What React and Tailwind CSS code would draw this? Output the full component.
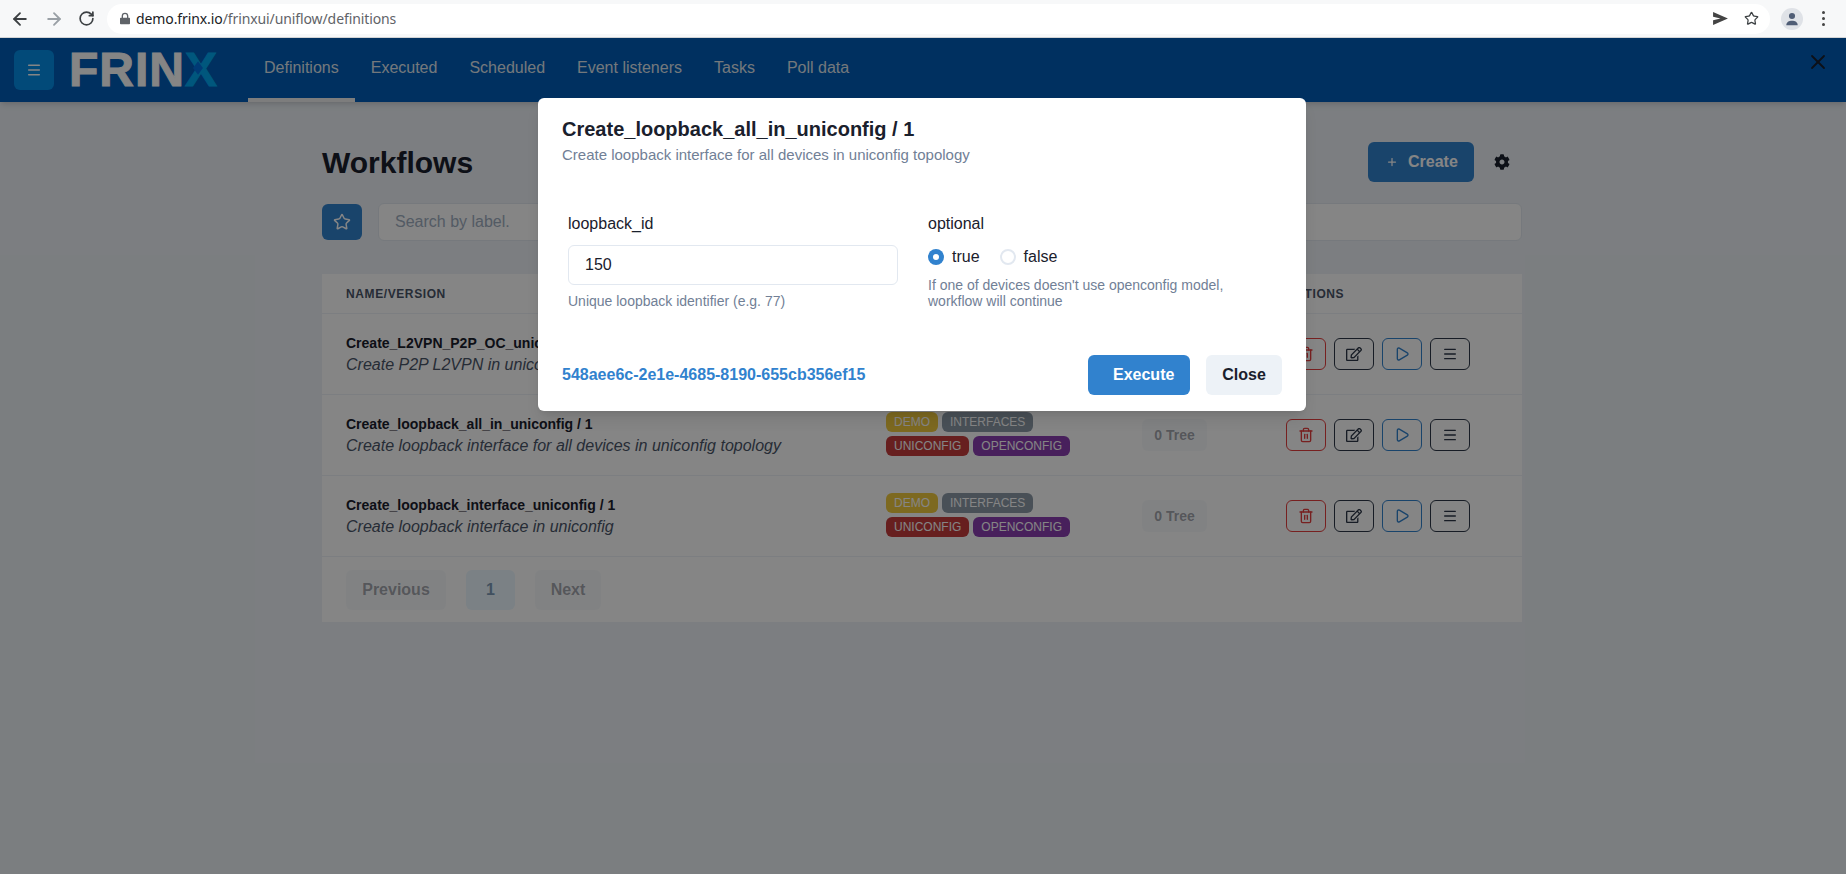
import React from 'react';
import { ArrowLeft, ArrowRight, RotateCw, Star, Trash2, Play, Plus, X, Menu } from 'lucide-react';
import { FaRegEdit, FaCog } from 'react-icons/fa';

const tabs = ['Definitions', 'Executed', 'Scheduled', 'Event listeners', 'Tasks', 'Poll data'];

const rows = [
  { name: 'Create_L2VPN_P2P_OC_uniconfig / 1', desc: 'Create P2P L2VPN in uniconfig' },
  { name: 'Create_loopback_all_in_uniconfig / 1', desc: 'Create loopback interface for all devices in uniconfig topology' },
  { name: 'Create_loopback_interface_uniconfig / 1', desc: 'Create loopback interface in uniconfig' },
];

const BrowserBar = () => (
  <div className="h-[38px] shrink-0 bg-[#f7f8f9] border-b border-[#d4d5d6] flex items-center">
    <div className="flex items-center gap-[14px] pl-[10px] w-[107px] shrink-0">
      <ArrowLeft className="h-5 w-5 text-[#3c4043]" strokeWidth={2.2} />
      <ArrowRight className="h-5 w-5 text-[#9aa0a6]" strokeWidth={2.2} />
      <RotateCw className="h-[17px] w-[17px] text-[#3c4043]" strokeWidth={2.4} />
    </div>
    <div className="h-[30px] w-[1663px] bg-white rounded-full flex items-center pl-[13px] pr-[9px]">
      <svg viewBox="0 0 12 14" className="h-[13px] w-[10px] fill-[#5f6368]">
        <path d="M2 6V4a4 4 0 0 1 8 0v2h1a1 1 0 0 1 1 1v6a1 1 0 0 1-1 1H1a1 1 0 0 1-1-1V7a1 1 0 0 1 1-1h1zm1.6 0h4.8V4a2.4 2.4 0 0 0-4.8 0v2z" />
      </svg>
      <span className="ml-[6px] text-[14px] tracking-[-0.1px] font-['Noto_Sans',sans-serif] text-[#5f6368]">
        <span className="text-[#202124]">demo.frinx.io</span>/frinxui/uniflow/definitions
      </span>
      <svg viewBox="0 0 16 14" className="ml-auto h-[13px] w-[15px] fill-[#444]">
        <path d="M0 0l16 7-16 7 0-5 8-2-8-2z" />
      </svg>
      <Star className="ml-[16px] mr-[2px] h-[15px] w-[15px] text-[#3c4043]" strokeWidth={2} />
    </div>
    <div className="ml-[11px] h-[22px] w-[22px] rounded-full bg-[#dfe2e7] flex items-center justify-center">
      <svg viewBox="0 0 16 16" className="h-[14px] w-[14px] fill-[#4f5d75]">
        <circle cx="8" cy="4.5" r="3.500" />
        <path d="M1.500 15c0-3.500 3-5 6.500-5s6.500 1.500 6.500 5z" />
      </svg>
    </div>
    <div className="ml-[19px] flex flex-col gap-[3px]">
      <span className="h-[3px] w-[3px] rounded-full bg-[#444]" />
      <span className="h-[3px] w-[3px] rounded-full bg-[#444]" />
      <span className="h-[3px] w-[3px] rounded-full bg-[#444]" />
    </div>
  </div>
);

const Navbar = () => (
  <div className="relative h-16 bg-[#005cb8] flex items-center shadow-md pl-[14px]">
    <button className="h-10 w-10 rounded-md bg-[#048ee8] flex items-center justify-center">
      <Menu className="h-4 w-4 text-white" strokeWidth={2.2} />
    </button>
    <div className="relative ml-[15px] w-[147px] text-[48px] leading-none font-bold tracking-[1px] text-white [-webkit-text-stroke:1px_white]">
      FRIN<span className="text-[#00a8f0] [-webkit-text-stroke:1px_#00a8f0]">X</span>
      {/* darker centre where the strokes of the logo's X cross */}
      <svg viewBox="0 0 12 16" className="absolute left-[124px] top-[14px] h-4 w-[10px] fill-[#0070e0]">
        <polygon points="6,0 12,8 6,16 0,8" />
      </svg>
    </div>
    <nav className="ml-[32px] flex self-stretch">
      {tabs.map((tab, i) => (
        <div
          key={tab}
          className={`px-4 pt-[18px] text-[16px] leading-6 text-[#dfe6ee] border-b-4 ${i === 0 ? 'border-[#f0f0f0]' : 'border-transparent'}`}
        >
          {tab}
        </div>
      ))}
    </nav>
    <X className="absolute right-[16px] top-[12px] h-6 w-6 text-[#1a202c]" strokeWidth={1.8} />
  </div>
);

const Tag = ({ color, children }) => (
  <span className={`h-5 px-2 rounded-md text-[12px] leading-5 text-white ${color}`}>{children}</span>
);

const Row = ({ name, desc }) => (
  <div className="h-[81px] grid grid-cols-[540px_256px_144px_260px] items-center border-b border-[#edf2f7]">
    <div className="pl-6">
      <div className="text-[14px] leading-5 pt-px font-bold text-[#1a202c]">{name}</div>
      <div className="text-[16px] leading-6 italic text-[#4a5568]">{desc}</div>
    </div>
    <div className="pl-6 pb-0.5 flex flex-wrap gap-1 w-[226px]">
      <Tag color="bg-[#f0c93f]">DEMO</Tag>
      <Tag color="bg-[#8c9aa8]">INTERFACES</Tag>
      <Tag color="bg-[#c53d3d]">UNICONFIG</Tag>
      <Tag color="bg-[#8a3fb0]">OPENCONFIG</Tag>
    </div>
    <div className="pl-6">
      <div className="h-8 w-[65px] rounded-md bg-[#edf2f7]/40 flex items-center justify-center text-[14px] font-bold text-[#1a202c]/40">
        0 Tree
      </div>
    </div>
    <div className="pl-6 flex gap-2">
      <button className="h-8 w-10 rounded-md border border-[#e53e3e] flex items-center justify-center text-[#e53e3e]">
        <Trash2 className="h-4 w-4" strokeWidth={2} />
      </button>
      <button className="h-8 w-10 rounded-md border border-[#2d3748] flex items-center justify-center text-[#2d3748]">
        <FaRegEdit className="h-4 w-4" />
      </button>
      <button className="h-8 w-10 rounded-md border border-[#3182ce] flex items-center justify-center text-[#3182ce]">
        <Play className="h-4 w-4" strokeWidth={2} />
      </button>
      <button className="h-8 w-10 rounded-md border border-[#2d3748] flex items-center justify-center text-[#2d3748]">
        <Menu className="h-4 w-4" strokeWidth={2} />
      </button>
    </div>
  </div>
);

const Workflows = () => (
  <div className="pr-0.5">
    <div className="w-[1200px] mx-auto pt-10">
      <div className="flex items-center h-10">
        <h1 className="text-[30px] font-bold text-[#1a202c]">Workflows</h1>
        <button className="ml-auto h-10 w-[106px] rounded-md bg-[#3182ce] text-white font-bold text-[16px] flex items-center pl-[18px]">
          <Plus className="h-3 w-3" strokeWidth={2.5} />
          <span className="ml-[10px]">Create</span>
        </button>
        <div className="w-12 flex items-center justify-end pr-[12px]">
          <FaCog className="h-4 w-4 text-[#1a202c]" />
        </div>
      </div>
      <div className="mt-[21px] flex items-center gap-4">
        <button className="h-9 w-10 rounded-md bg-[#3182ce] flex items-center justify-center">
          <Star className="h-[18px] w-[18px] text-white" strokeWidth={2} />
        </button>
        <div className="h-[38px] flex-1 rounded-md bg-white border border-[#e2e8f0] pl-4 flex items-center text-[16px] text-[#a0aec0]">
          Search by label.
        </div>
      </div>
      <div className="mt-[33px] bg-white">
        <div className="h-10 grid grid-cols-[540px_256px_144px_260px] items-center border-b border-[#edf2f7] text-[12px] font-bold tracking-[0.6px] text-[#4a5568]">
          <div className="pl-6">NAME/VERSION</div>
          <div className="pl-6">LABELS</div>
          <div className="pl-6">INCLUDED AT</div>
          <div className="pl-6">ACTIONS</div>
        </div>
        {rows.map((row) => (
          <Row key={row.name} {...row} />
        ))}
        <div className="h-[65px] flex items-center pl-6 gap-5 text-[16px] font-bold">
          <div className="h-10 w-[100px] rounded-md bg-[#edf2f7]/40 flex items-center justify-center text-[#1a202c]/40">Previous</div>
          <div className="h-10 w-[49px] rounded-md bg-[#ebf8ff] flex items-center justify-center text-[#7d9ab7]">1</div>
          <div className="h-10 w-[66px] rounded-md bg-[#edf2f7]/40 flex items-center justify-center text-[#1a202c]/40">Next</div>
        </div>
      </div>
    </div>
  </div>
);

const ExecuteModal = () => (
  <div className="absolute inset-0 bg-black/48 pr-0.5 pt-[60px]">
    <div className="w-[768px] mx-auto bg-white rounded-md shadow-lg">
      <div className="px-6 pt-4">
        <div className="text-[20px] leading-[30px] font-bold text-[#1a202c]">Create_loopback_all_in_uniconfig / 1</div>
        <div className="text-[15px] leading-[22px] text-[#718096]">Create loopback interface for all devices in uniconfig topology</div>
      </div>
      <div className="pt-[46px] pb-[30px] pl-[30px] grid grid-cols-[330px_330px] gap-x-[30px]">
        <div>
          <label className="block text-[16px] leading-6 text-[#1a202c]">loopback_id</label>
          <div className="mt-[9px] h-10 rounded-md border border-[#e2e8f0] pl-4 flex items-center text-[16px] text-[#1a202c]">150</div>
          <p className="mt-2 text-[14px] leading-4 text-[#718096]">Unique loopback identifier (e.g. 77)</p>
        </div>
        <div>
          <label className="block text-[16px] leading-6 text-[#1a202c]">optional</label>
          <div className="mt-[9px] h-6 flex items-center text-[16px] text-[#1a202c]">
            <span className="h-4 w-4 rounded-full bg-[#3182ce] flex items-center justify-center">
              <span className="h-[6px] w-[6px] rounded-full bg-white" />
            </span>
            <span className="ml-2">true</span>
            <span className="ml-5 h-4 w-4 rounded-full border-2 border-[#e2e8f0]" />
            <span className="ml-2">false</span>
          </div>
          <p className="mt-2 text-[14px] leading-4 text-[#718096]">If one of devices doesn't use openconfig model, workflow will continue</p>
        </div>
      </div>
      <div className="px-6 pt-4 pb-4 flex items-center">
        <a className="text-[16px] font-bold text-[#3182ce]">548aee6c-2e1e-4685-8190-655cb356ef15</a>
        <button className="ml-auto h-10 w-[102px] pl-[25px] rounded-md bg-[#3182ce] text-[16px] font-bold text-white text-left">Execute</button>
        <button className="ml-4 h-10 w-[76px] rounded-md bg-[#edf2f7] text-[16px] font-bold text-[#1a202c]">Close</button>
      </div>
    </div>
  </div>
);

export default function App() {
  return (
    <div className="h-screen overflow-hidden flex flex-col font-['Liberation_Sans',Arial,sans-serif]">
      <BrowserBar />
      <div className="relative flex-1 bg-[#edf2f7]">
        <Navbar />
        <Workflows />
        <ExecuteModal />
      </div>
    </div>
  );
}
